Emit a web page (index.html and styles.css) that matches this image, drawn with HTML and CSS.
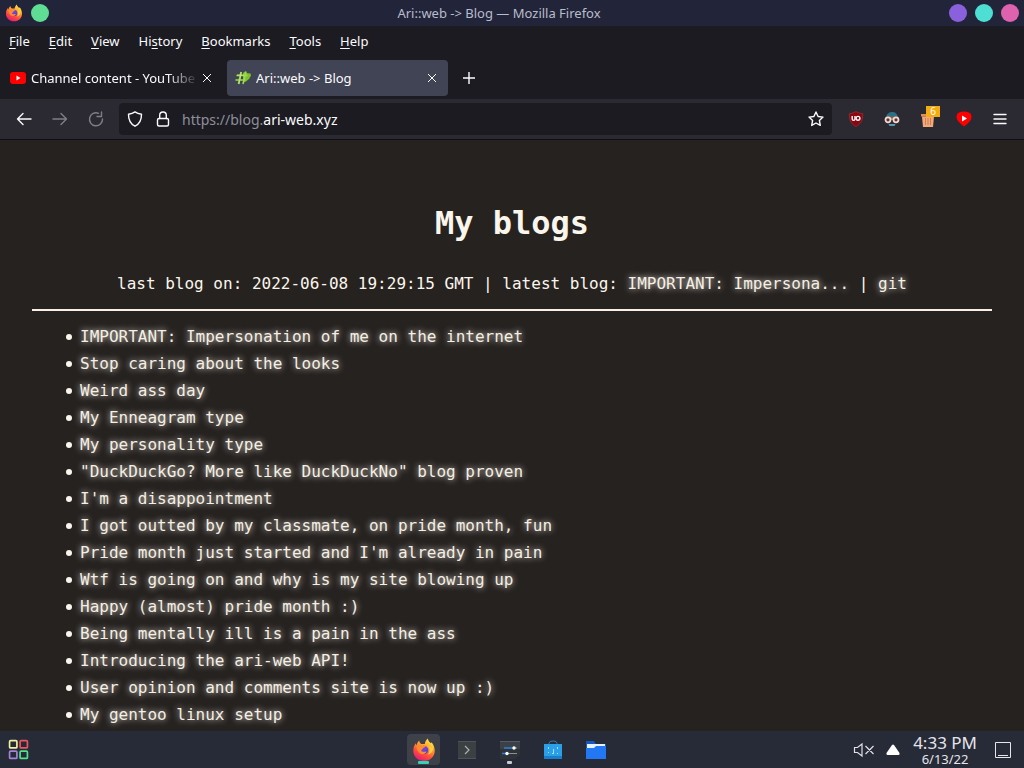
FILE: index.html
```html
<!DOCTYPE html>
<html lang="en">
<head>
  <meta charset="UTF-8">
  <title>Ari::web -> Blog</title>
  <meta name="viewport" content="width=device-width, initial-scale=1.0">
  <link rel="stylesheet" href="styles.css">
</head>
<body>
  <!-- shared gradients and the firefox logo -->
  <svg class="defs" width="0" height="0" aria-hidden="true">
    <defs>
      <linearGradient id="fire" x1="0.8" y1="0" x2="0.3" y2="1">
        <stop offset="0" stop-color="#fff04a"/>
        <stop offset="0.35" stop-color="#ffa52e"/>
        <stop offset="0.7" stop-color="#ff4a3e"/>
        <stop offset="1" stop-color="#e3197b"/>
      </linearGradient>
      <linearGradient id="globe" x1="0" y1="0" x2="1" y2="1">
        <stop offset="0" stop-color="#9b4de0"/>
        <stop offset="1" stop-color="#4a3cc4"/>
      </linearGradient>
      <symbol id="firefox" viewBox="0 0 24 24">
        <path fill="url(#fire)" d="M12 23C5.700 23 1.300 18.500 1.300 12.500c0-3 1-5.400 2.500-7.300l.5 2.300C5 6.200 5.500 4 7.200 2.600c.1 1.400.8 2.600 2 3.400h3.600c.2-2 1.200-4 3-5.500.3 2.300 1.700 3.500 3 5l.7-1.300c2 2.300 3.200 5.200 3.200 8.300C22.700 18.500 18.300 23 12 23z"/>
        <circle cx="12" cy="12" r="4.300" fill="url(#globe)"/>
        <path fill="#ff8a30" d="M4.500 8c2-1.700 4.500-1.500 6.200-.3h3c-.3 1.400-1.800 1.800-2.600 2.300-.3 1.200-1.500 1.500-2 2.700 1.300 1.700 3.700.5 5.400.7-1 2.800-5 3.800-7.300 1.400C5.500 13 4.300 10.500 4.500 8z"/>
        <path fill="#ffd23c" d="M15.500 1.500c.4 3.300 3.800 4.600 4.500 9.300-1-1.500-2.200-2.500-3.600-3 1.700 3 1.700 6-.2 8.700 4.500-1.200 5.600-5.500 4.400-9.500-1-2-4.600-3-5.100-5.500z"/>
      </symbol>
    </defs>
  </svg>

  <header class="titlebar">
    <div class="titlebar-left">
      <svg class="app-icon" viewBox="0 0 24 24"><use href="#firefox"/></svg>
      <button class="dot green" aria-label="Pin"></button>
    </div>
    <span class="window-title">Ari::web -&gt; Blog — Mozilla Firefox</span>
    <div class="titlebar-right">
      <button class="dot purple" aria-label="Minimize"></button>
      <button class="dot teal" aria-label="Maximize"></button>
      <button class="dot pink" aria-label="Close"></button>
    </div>
  </header>

  <nav class="menubar">
    <button><u>F</u>ile</button>
    <button><u>E</u>dit</button>
    <button><u>V</u>iew</button>
    <button>Hi<u>s</u>tory</button>
    <button><u>B</u>ookmarks</button>
    <button><u>T</u>ools</button>
    <button><u>H</u>elp</button>
  </nav>

  <div class="tabs">
    <div class="tab">
      <svg class="favicon" viewBox="0 0 16 16">
        <rect x="0" y="2" width="16" height="12" rx="3" fill="#f00"/>
        <path fill="#fff" d="M6.500 5.500v5l4-2.500z"/>
      </svg>
      <span class="tab-label faded">Channel content - YouTube Studio</span>
      <button class="tab-close" aria-label="Close tab">
        <svg viewBox="0 0 10 10"><path d="M1 1l8 8M9 1l-8 8"/></svg>
      </button>
    </div>
    <div class="tab active">
      <svg class="favicon" viewBox="0 0 16 16">
        <path fill="#7fc02f" d="M8 3l2-1.500 1 1.500 4.500.5.500 2-2 3.500-3 2.500-3 1z"/>
        <path fill="none" stroke="#9bdc4a" stroke-width="1.600" d="M6 2L3.500 14M11 1.500L8 14M1.500 5.500h11M.5 10h10"/>
        <path fill="none" stroke="#d4ee9b" stroke-width="0.700" d="M6.500 2L4 14M2 5h7"/>
      </svg>
      <span class="tab-label">Ari::web -&gt; Blog</span>
      <button class="tab-close" aria-label="Close tab">
        <svg viewBox="0 0 10 10"><path d="M1 1l8 8M9 1l-8 8"/></svg>
      </button>
    </div>
    <button class="new-tab" aria-label="New tab">
      <svg viewBox="0 0 12 12"><path d="M6 0v12M0 6h12"/></svg>
    </button>
  </div>

  <div class="toolbar">
    <div class="nav-buttons">
      <button aria-label="Back">
        <svg class="line" viewBox="0 0 16 16"><path d="M15 8H1.500M7 2.500L1.500 8 7 13.500"/></svg>
      </button>
      <button class="disabled" aria-label="Forward">
        <svg class="line" viewBox="0 0 16 16"><path d="M1 8h13.500M9 2.500L14.500 8 9 13.500"/></svg>
      </button>
      <button class="disabled" aria-label="Reload">
        <svg class="line" viewBox="0 0 16 16"><path d="M10.500 2.300A6.500 6.500 0 1 0 14.500 8M9 5.500h4.500V1"/></svg>
      </button>
    </div>
    <div class="urlbar">
      <svg class="line" viewBox="0 0 16 16"><path d="M8 .9c2 1.400 4.200 2 6.500 2.300C14.600 8.500 12.700 12.800 8 15.200 3.300 12.800 1.400 8.500 1.500 3.200 3.800 2.900 6 2.300 8 .9z"/></svg>
      <svg class="line" viewBox="0 0 16 16"><rect x="2.500" y="7.500" width="11" height="7.500" rx="1.500"/><path d="M4.700 7.500V4.300a3.300 3.300 0 0 1 6.600 0v3.200"/></svg>
      <a class="address" href="https://blog.ari-web.xyz">https://blog.<b>ari-web.xyz</b></a>
      <button class="star" aria-label="Bookmark this page">
        <svg class="line" viewBox="0 0 16 16"><path d="M8 1l2.100 4.500 4.900.6-3.600 3.400.9 4.900L8 12l-4.300 2.400.9-4.900L1 6.100l4.900-.6z"/></svg>
      </button>
    </div>
    <div class="extensions">
      <button aria-label="uBlock Origin">
        <svg viewBox="0 0 16 16">
          <path fill="#8c0610" stroke="#b5303a" stroke-width="0.600" d="M8 .5c2 1.300 4 2 6.700 2.200.2 6-1.500 10-6.700 12.800C2.800 12.700 1.100 8.700 1.300 2.700 4 2.500 6 1.800 8 .5z"/>
          <path fill="none" stroke="#fff" stroke-width="1.400" d="M4.200 5v3a1.400 1.400 0 0 0 2.800 0V5"/>
          <circle cx="10" cy="7.300" r="1.900" fill="none" stroke="#fff" stroke-width="1.400"/>
        </svg>
      </button>
      <button aria-label="Privacy spoofer">
        <svg viewBox="0 0 16 16">
          <path fill="#2c7088" d="M2 6.500C2.300 3 5 1 8.500 1c3 0 5 2 5.500 5.500z"/>
          <path fill="#8c5b4c" d="M2.500 5.500h11v2h-11z"/>
          <path fill="#579ab0" d="M4.500 13h7l-1 2h-5z"/>
          <circle cx="4" cy="8.800" r="2.500" fill="#5b3238" stroke="#f4d9cd" stroke-width="1.800"/>
          <circle cx="12" cy="8.800" r="2.500" fill="#5b3238" stroke="#f4d9cd" stroke-width="1.800"/>
          <path stroke="#f4d9cd" d="M6.500 8h3"/>
        </svg>
      </button>
      <button class="with-badge" aria-label="Cookie cleaner">
        <svg viewBox="0 0 16 16">
          <path fill="#e58a53" d="M1 3h13v2.500H1z"/>
          <path fill="#f2a878" d="M2 5.500h12l-1 10.500H3z"/>
          <path stroke="#cf7f50" d="M5.500 7v7M8 7v7M10.500 7v7"/>
        </svg>
        <span class="badge">6</span>
      </button>
      <button aria-label="YouTube tool">
        <svg viewBox="0 0 16 16">
          <path fill="#f00" d="M3 1.500Q8-.5 13 1.500q2.500 1 2.500 4 0 3-1.500 4.500-3 3.500-6 5.500-3-2-6-5.500Q.5 8.500.5 5.500q0-3 2.500-4z"/>
          <path fill="#fff" d="M6 4.500v6L11 7.500z"/>
        </svg>
      </button>
      <button aria-label="Open menu">
        <svg class="line" viewBox="0 0 16 16"><path d="M2 3.500h12M2 8h12M2 12.500h12"/></svg>
      </button>
    </div>
  </div>

  <main class="page">
    <h1>My blogs</h1>
    <p class="info">last blog on: 2022-06-08 19:29:15 GMT | latest blog: <a href="#">IMPORTANT: Impersona...</a> | <a href="#">git</a></p>
    <hr>
    <ul class="blogs">
      <li><a href="#">IMPORTANT: Impersonation of me on the internet</a></li>
      <li><a href="#">Stop caring about the looks</a></li>
      <li><a href="#">Weird ass day</a></li>
      <li><a href="#">My Enneagram type</a></li>
      <li><a href="#">My personality type</a></li>
      <li><a href="#">"DuckDuckGo? More like DuckDuckNo" blog proven</a></li>
      <li><a href="#">I'm a disappointment</a></li>
      <li><a href="#">I got outted by my classmate, on pride month, fun</a></li>
      <li><a href="#">Pride month just started and I'm already in pain</a></li>
      <li><a href="#">Wtf is going on and why is my site blowing up</a></li>
      <li><a href="#">Happy (almost) pride month :)</a></li>
      <li><a href="#">Being mentally ill is a pain in the ass</a></li>
      <li><a href="#">Introducing the ari-web API!</a></li>
      <li><a href="#">User opinion and comments site is now up :)</a></li>
      <li><a href="#">My gentoo linux setup</a></li>
    </ul>
  </main>

  <footer class="taskbar">
    <button class="launcher" aria-label="Applications">
      <svg viewBox="0 0 20 20" fill="none" stroke-width="1.600">
        <rect x="1.500" y="1.500" width="7" height="7" rx="1" stroke="#f1f1a0"/>
        <rect x="11.500" y="1.500" width="7" height="7" rx="1" stroke="#ee5560"/>
        <rect x="1.500" y="11.500" width="7" height="7" rx="1" stroke="#a583d8"/>
        <rect x="11.500" y="11.500" width="7" height="7" rx="1" stroke="#4fe38a"/>
      </svg>
    </button>
    <div class="tasks">
      <button class="task current" aria-label="Firefox">
        <svg viewBox="0 0 24 24"><use href="#firefox"/></svg>
      </button>
      <button class="task" aria-label="Terminal">
        <svg viewBox="0 0 24 24">
          <rect x="3" y="3" width="18" height="18" fill="#3b4142"/>
          <path fill="#4d5455" d="M3 3h18v1H3zM3 20h18v1H3z"/>
          <path fill="none" stroke="#a9b2b2" stroke-width="1.200" d="M10 8l4 4-4 4"/>
        </svg>
      </button>
      <button class="task running" aria-label="Settings">
        <svg viewBox="0 0 24 24">
          <path fill="#3b4146" d="M2 3h20v8H2z"/>
          <path fill="#2e3338" d="M2 11h20v6l-5 4H2z"/>
          <path fill="#555b60" d="M2 3h20v1H2z"/>
          <path stroke="#2f7de0" stroke-width="1.600" d="M6 10h10M4 15.500h6"/>
          <path stroke="#8a9095" d="M10 15.500h9M16 10h3"/>
          <circle cx="16" cy="10" r="1.700" fill="#fff"/>
          <circle cx="9" cy="15.500" r="1.700" fill="#fff"/>
        </svg>
      </button>
      <button class="task" aria-label="Software">
        <svg viewBox="0 0 24 24">
          <path fill="none" stroke="#2b7cb2" d="M8 7V5q0-2 4-2t4 2v2"/>
          <path fill="#2b9fe8" d="M3 6h18v15H3z"/>
          <path fill="#1680cf" d="M3 18h18v3H3z"/>
          <path fill="#9be0ff" d="M7 9h1v2H7zM16 9h1v2h-1zM12 11h1v5h-2v-1h1zM7 14h1v1H7zM16 15h1v1h-1z"/>
        </svg>
      </button>
      <button class="task" aria-label="Files">
        <svg viewBox="0 0 24 24">
          <path fill="#1257c4" d="M2 3h8l2 3h10v7H2z"/>
          <path fill="#e8f2ff" d="M3 6h18v4H3z"/>
          <path fill="#2277f4" d="M2 10h8l2-2h10v13H2z"/>
        </svg>
      </button>
    </div>
    <div class="tray">
      <button aria-label="Muted">
        <svg class="mute" viewBox="0 0 22 16" fill="none" stroke="#dfe0e6" stroke-width="1.200"><path d="M1.500 5.500v5h3L9 14V2L4.500 5.500zM12.500 4l8 8M20.500 4l-8 8"/></svg>
      </button>
      <button aria-label="Show hidden icons">
        <svg class="arrow" viewBox="0 0 14 12"><path fill="#fff" d="M6 1q1-1 2 0l5.500 8q.5 2-1 2h-11q-1.500 0-1-2z"/></svg>
      </button>
      <div class="clock">
        <span class="time">4:33 PM</span>
        <span class="date">6/13/22</span>
      </div>
      <button aria-label="Show desktop">
        <svg class="desktop" viewBox="0 0 16 16" fill="none" stroke="#e6e6ea"><path d="M.5.500h15v15H.5zM3 13.500h10"/></svg>
      </button>
    </div>
  </footer>
</body>
</html>
```
FILE: styles.css
```css
* {
  box-sizing: border-box;
}
body {
  margin: 0;
  height: 100vh;
  display: flex;
  flex-direction: column;
  background-color: #262220;
  color: #fbfbfe;
  font-family: "Noto Sans", sans-serif;
  font-size: 13px;
  overflow: hidden;
}
button {
  background: none;
  border: none;
  padding: 0;
  color: inherit;
  font: inherit;
  display: flex;
  align-items: center;
  justify-content: center;
}
svg {
  display: block;
  flex-shrink: 0;
}
.defs {
  position: absolute;
}

/* window title */
.titlebar {
  display: grid;
  grid-template-columns: 1fr auto 1fr;
  align-items: center;
  height: 26px;
  flex-shrink: 0;
  padding: 0 5px;
  background-color: #22253a;
  color: #b9bccb;
}
.titlebar-left, .titlebar-right {
  display: flex;
  align-items: center;
  gap: 8px;
}
.titlebar-right {
  justify-content: flex-end;
}
.window-title {
  padding-right: 26px;
}
.app-icon {
  width: 18px;
  height: 18px;
}
.dot {
  width: 18px;
  height: 18px;
  border-radius: 50%;
}
.green {
  background-color: #5fdd94;
}
.purple {
  background-color: #8a60dc;
}
.teal {
  background-color: #4ddfd3;
}
.pink {
  background-color: #df62ae;
}

.menubar {
  display: flex;
  gap: 1px;
  height: 30px;
  flex-shrink: 0;
  background-color: #1c1b22;
}
.menubar button {
  display: block;
  padding: 0 9px;
}
.menubar u {
  text-underline-offset: 2px;
}

/* tabs */
.tabs {
  display: flex;
  align-items: center;
  gap: 4px;
  height: 43px;
  flex-shrink: 0;
  padding: 0 2px;
  background-color: #1c1b22;
}
.tab {
  display: flex;
  align-items: center;
  flex: 0 1 221px;
  min-width: 0;
  height: 36px;
  padding: 0 8px;
  border-radius: 4px;
}
.tab.active {
  background-color: #414454;
}
.favicon {
  width: 16px;
  height: 16px;
  margin-right: 5px;
}
.tab-label {
  flex: 1;
  min-width: 0;
  overflow: hidden;
  white-space: nowrap;
}
.tab-label.faded {
  -webkit-mask-image: linear-gradient(to left, transparent, #000 32px);
  mask-image: linear-gradient(to left, transparent, #000 32px);
}
.tab-close {
  width: 16px;
  height: 16px;
}
.tab-close svg {
  width: 10px;
  height: 10px;
  stroke: #fbfbfe;
}
.new-tab {
  width: 34px;
  height: 34px;
}
.new-tab svg {
  width: 12px;
  height: 12px;
  stroke: #fbfbfe;
  stroke-width: 1.4;
}

/* navigation */
.toolbar {
  display: flex;
  align-items: center;
  height: 41px;
  flex-shrink: 0;
  padding: 0 6px;
  background-color: #2b2a33;
  border-bottom: 1px solid #0f0e12;
}
.nav-buttons, .extensions {
  display: flex;
}
.nav-buttons button, .extensions button {
  width: 36px;
  height: 32px;
}
.toolbar svg {
  width: 16px;
  height: 16px;
}
.line {
  fill: none;
  stroke: #fbfbfe;
  stroke-width: 1.4;
  stroke-linecap: round;
  stroke-linejoin: round;
}
.disabled {
  opacity: 0.4;
}
.urlbar {
  display: flex;
  align-items: center;
  gap: 10px;
  flex: 1;
  height: 32px;
  margin: 0 6px 0 5px;
  padding: 0 7px;
  border-radius: 4px;
  background-color: #1c1b22;
}
.urlbar svg {
  width: 18px;
  height: 18px;
  padding: 1px;
}
.address {
  flex: 1;
  color: #8f8f99;
  font-size: 14px;
  text-decoration: none;
}
.address b {
  color: #fbfbfe;
  font-weight: normal;
}
.with-badge {
  position: relative;
}
.badge {
  position: absolute;
  top: 3px;
  right: 6px;
  width: 14px;
  height: 11px;
  background-color: #f5ac12;
  color: #fff;
  font-size: 10px;
  line-height: 11px;
}

/* blog */
.page {
  flex: 1;
  min-height: 0;
  overflow: hidden;
  padding: 64px 32px 0;
  background-color: #262220;
  color: #fbf6ec;
  font-family: "DejaVu Sans Mono", monospace;
  font-size: 16px;
  line-height: 27px;
}
.page h1 {
  margin: 0;
  font-size: 32px;
  line-height: 38px;
  text-align: center;
}
.info {
  margin: 28px 0 12px;
  text-align: center;
}
.page hr {
  height: 2px;
  margin: 0 0 12px;
  border: none;
  background-color: #f6efe2;
}
.page a {
  color: #f5efe4;
  text-decoration: none;
  text-shadow: 0 0 6px #f5efe4;
}
.blogs {
  margin: 0;
  padding-left: 34px;
  list-style: none;
}
.blogs li {
  display: flex;
  align-items: center;
}
.blogs li::before {
  content: "";
  width: 6px;
  height: 6px;
  margin-right: 8px;
  border-radius: 50%;
  background-color: #fbf6ec;
}

/* desktop panel */
.taskbar {
  display: grid;
  grid-template-columns: 1fr auto 1fr;
  align-items: center;
  height: 37px;
  flex-shrink: 0;
  padding: 0 13px 0 8px;
  background-color: #272a37;
  color: #e4e5ea;
}
.launcher {
  justify-self: start;
}
.launcher svg {
  width: 21px;
  height: 21px;
}
.tasks {
  display: flex;
  gap: 10px;
}
.task {
  position: relative;
  width: 33px;
  height: 31px;
  border-radius: 4px;
}
.task svg {
  width: 24px;
  height: 24px;
}
.task.current {
  background-color: #3f4149;
}
.task.current::after, .task.running::after {
  content: "";
  position: absolute;
  bottom: 1px;
  left: 11px;
  width: 11px;
  height: 3px;
  border-radius: 1px;
  background-color: #2fd6b5;
}
.task.running::after {
  left: 14px;
  width: 5px;
  background-color: #c9cbd2;
}
.tray {
  display: flex;
  align-items: center;
  justify-content: flex-end;
}
.mute {
  width: 22px;
  height: 16px;
}
.arrow {
  width: 14px;
  height: 12px;
  margin-left: 11px;
}
.clock {
  display: flex;
  flex-direction: column;
  align-items: center;
  margin: 0 18px 0 13px;
  padding-top: 3px;
}
.time {
  font-size: 17px;
  line-height: 16px;
}
.date {
  font-size: 13px;
  line-height: 16px;
}
.desktop {
  width: 16px;
  height: 16px;
}
```
